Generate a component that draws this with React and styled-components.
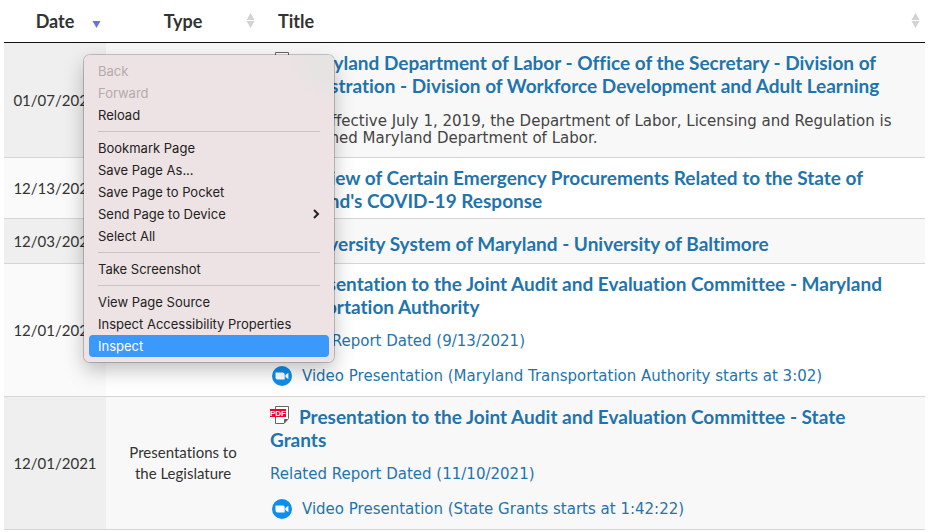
import React from 'react';
import styled, { createGlobalStyle, css } from 'styled-components';

const GlobalStyle = createGlobalStyle`
  * { box-sizing: border-box; }
  body {
    margin: 0;
    background: #fff;
    color: #333;
    font-family: Lato, 'Liberation Sans', sans-serif;
    font-variant-ligatures: none;
    overflow: hidden;
  }
`;

const Page = styled.main`
  position: relative;
  padding: 0 4px;
`;

const Table = styled.table`
  width: 100%;
  table-layout: fixed;
  border-collapse: separate;
  border-spacing: 0;
`;

const HeaderCell = styled.th`
  width: ${(p) => p.$width || 'auto'};
  padding: 0;
  border-bottom: 1px solid #111;
`;

const SortButton = styled.button`
  display: grid;
  grid-template-columns: 10px 1fr 10px;
  gap: 3px;
  align-items: center;
  width: 100%;
  height: 42px;
  padding: 0 5px;
  border: 0;
  background: none;
  color: #333;
  font: 700 18px/22px Lato, sans-serif;
  text-align: ${(p) => p.$align || 'center'};
`;

const Label = styled.span`
  grid-column: 2;
`;

const Cell = styled.td`
  padding: ${(p) => (p.$compact ? '13px 20px 8px 10px' : '8px 20px 6px 10px')};
  border-bottom: 1px solid #d5d5d5;
  vertical-align: middle;
`;

const DateCell = styled(Cell)`
  padding: 0;
  font-size: 15px;
  line-height: 21px;
  text-align: center;
`;

const TypeCell = styled(DateCell)`
  padding: 0 20px;
`;

const Row = styled.tr`
  &:nth-child(odd) { background: #f8f8f8; }
  &:nth-child(odd) ${DateCell}:first-child { background: #efefef; }
  &:nth-child(even) ${DateCell}:first-child { background: #fafafa; }
`;

const linkColor = css`
  color: #1f74ad;
  text-decoration: none;
`;

const TitleLink = styled.a`
  ${linkColor}
  display: block;
  font-size: 19px;
  font-weight: 700;
  line-height: 23px;
`;

const detail = css`
  margin: 15px 0 0;
  font: 15px/17px 'DejaVu Sans', Verdana, sans-serif;
`;

const Note = styled.p`
  ${detail}
  padding: 1px 0 4px;
  color: #444;
`;

const DetailLink = styled.a`
  ${linkColor}
  ${detail}
  display: block;
`;

const VideoLink = styled(DetailLink)`
  display: flex;
  align-items: center;
  gap: 10px;
  margin: 16px 0 4px;
  padding-left: 2px;
`;

const PdfSvg = styled.svg`
  display: inline-block;
  margin-right: 10px;
  vertical-align: 0;
`;

const PdfLabel = styled.text`
  fill: #fff;
  font: 700 8px 'Liberation Sans', sans-serif;
`;

const Menu = styled.div`
  position: absolute;
  top: 55px;
  left: 84px;
  width: 250px;
  padding: 5px;
  border-radius: 6px;
  background: radial-gradient(circle at 100% 0, #e6e3e2 20px, #ede3e4 50px);
  box-shadow: 0 0 0 1px rgba(0, 0, 0, 0.2), 0 8px 20px rgba(0, 0, 0, 0.25);
`;

const MenuItem = styled.button`
  display: flex;
  align-items: center;
  justify-content: space-between;
  width: 100%;
  height: 22px;
  padding: 0 9px;
  border: 0;
  border-radius: 4px;
  background: ${(p) => (p.$active ? '#3b99fb' : 'transparent')};
  color: ${(p) => (p.$active ? '#fff' : '#222')};
  font: 13px/16px Inter, sans-serif;
  text-align: left;

  &:disabled { color: #b3abac; }
`;

const Separator = styled.hr`
  height: 1px;
  margin: 5px 9px;
  border: 0;
  background: #cbc2c3;
`;

function SortIcon({ active }) {
  return (
    <svg width="10" height="16" viewBox="0 0 10 16" aria-hidden="true">
      {active ? (
        <path d="M1.500 8h8l-4 7z" fill="#6674dc" />
      ) : (
        <path d="M1.500 7h8l-4-7zM1.500 8h8l-4 7z" fill="#d3d3d3" />
      )}
    </svg>
  );
}

function PdfIcon() {
  return (
    <PdfSvg width="19" height="18" viewBox="0 0 19 18" role="img" aria-label="PDF">
      <path d="M5.500 .5h13v12l-4.500 5h-8.500z" fill="#fff" stroke="#666" />
      <path d="M14 17.500v-4.500h4.500z" fill="#666" />
      <path d="M0 3h16v8H0z" fill="#f5002c" />
      <PdfLabel x="0" y="10">PDF</PdfLabel>
    </PdfSvg>
  );
}

function VideoIcon() {
  return (
    <svg width="20" height="20" viewBox="0 0 20 20" aria-hidden="true">
      <circle cx="10" cy="10" r="10" fill="#0e8eec" />
      <path d="M3.500 6.500h7.200q2 0 2 2v5H5.500q-2 0-2-2zM13.400 9l3-2.200v6.400l-3-2.200z" fill="#fff" />
    </svg>
  );
}

const reports = [
  {
    date: '01/07/2022',
    title: 'Maryland Department of Labor - Office of the Secretary - Division of Administration - Division of Workforce Development and Adult Learning',
    note: 'NOTE: Effective July 1, 2019, the Department of Labor, Licensing and Regulation is now named Maryland Department of Labor.',
  },
  {
    date: '12/13/2021',
    title: "Review of Certain Emergency Procurements Related to the State of Maryland's COVID-19 Response",
  },
  {
    date: '12/03/2021',
    title: 'University System of Maryland - University of Baltimore',
    compact: true,
  },
  {
    date: '12/01/2021',
    type: 'Presentations to the Legislature',
    title: 'Presentation to the Joint Audit and Evaluation Committee - Maryland Transportation Authority',
    related: 'Related Report Dated (9/13/2021)',
    video: 'Video Presentation (Maryland Transportation Authority starts at 3:02)',
  },
  {
    date: '12/01/2021',
    type: 'Presentations to the Legislature',
    title: 'Presentation to the Joint Audit and Evaluation Committee - State Grants',
    related: 'Related Report Dated (11/10/2021)',
    video: 'Video Presentation (State Grants starts at 1:42:22)',
  },
];

const menuGroups = [
  [{ label: 'Back', disabled: true }, { label: 'Forward', disabled: true }, { label: 'Reload' }],
  [
    { label: 'Bookmark Page' },
    { label: 'Save Page As...' },
    { label: 'Save Page to Pocket' },
    { label: 'Send Page to Device', submenu: true },
    { label: 'Select All' },
  ],
  [{ label: 'Take Screenshot' }],
  [{ label: 'View Page Source' }, { label: 'Inspect Accessibility Properties' }, { label: 'Inspect', active: true }],
];

function ContextMenu() {
  return (
    <Menu role="menu">
      {menuGroups.map((group, i) => (
        <React.Fragment key={group[0].label}>
          {i > 0 && <Separator />}
          {group.map((item) => (
            <MenuItem key={item.label} type="button" role="menuitem" disabled={item.disabled} $active={item.active}>
              {item.label}
              {item.submenu && (
                <svg width="8" height="10" viewBox="0 0 8 10" aria-hidden="true">
                  <path d="M2 1l4 4-4 4" fill="none" stroke="#222" strokeWidth="2" />
                </svg>
              )}
            </MenuItem>
          ))}
        </React.Fragment>
      ))}
    </Menu>
  );
}

export default function App() {
  return (
    <Page>
      <GlobalStyle />
      <Table>
        <thead>
          <tr>
            <HeaderCell $width="102px" aria-sort="descending">
              <SortButton type="button"><Label>Date</Label><SortIcon active /></SortButton>
            </HeaderCell>
            <HeaderCell $width="154px">
              <SortButton type="button"><Label>Type</Label><SortIcon /></SortButton>
            </HeaderCell>
            <HeaderCell>
              <SortButton type="button" $align="left"><Label>Title</Label><SortIcon /></SortButton>
            </HeaderCell>
          </tr>
        </thead>
        <tbody>
          {reports.map((r) => (
            <Row key={r.title}>
              <DateCell>{r.date}</DateCell>
              <TypeCell>{r.type}</TypeCell>
              <Cell $compact={r.compact}>
                <TitleLink href="#"><PdfIcon />{r.title}</TitleLink>
                {r.note && <Note>{r.note}</Note>}
                {r.related && <DetailLink href="#">{r.related}</DetailLink>}
                {r.video && <VideoLink href="#"><VideoIcon />{r.video}</VideoLink>}
              </Cell>
            </Row>
          ))}
        </tbody>
      </Table>
      <ContextMenu />
    </Page>
  );
}
